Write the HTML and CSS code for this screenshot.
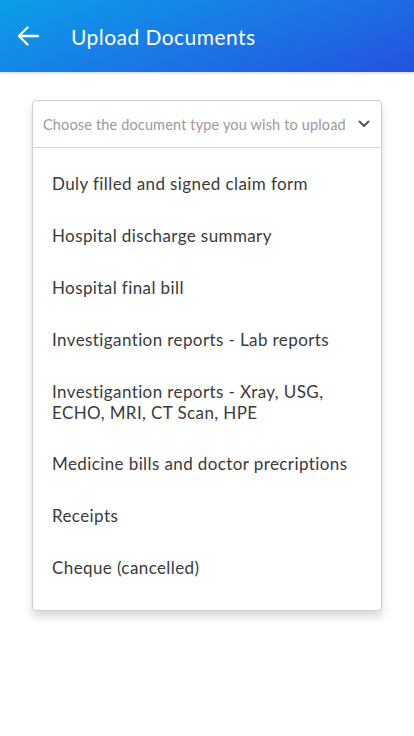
FILE: index.html
```html
<!DOCTYPE html>
<html>
<head>
<meta charset="utf-8">
<link rel="stylesheet" href="styles.css">
</head>
<body>
<header class="appbar">
  <svg class="back" width="22" height="20" viewBox="0 0 22 20"><path d="M21 10H2.5M10.5 1.5L2 10l8.5 8.5" fill="none" stroke="#fff" stroke-width="2.3" stroke-linecap="round" stroke-linejoin="round"/></svg>
  <h1 class="title">Upload Documents</h1>
</header>
<main class="content">
  <div class="select">
    <div class="select-head">
      <span class="placeholder">Choose the document type you wish to upload</span>
      <svg class="chev" width="12" height="8" viewBox="0 0 12 8"><path d="M1.5 1.5L6 6l4.5-4.5" fill="none" stroke="#555" stroke-width="2" stroke-linecap="round" stroke-linejoin="round"/></svg>
    </div>
    <ul class="menu">
      <li>Duly filled and signed claim form</li>
      <li>Hospital discharge summary</li>
      <li>Hospital final bill</li>
      <li>Investigantion reports - Lab reports</li>
      <li>Investigantion reports - Xray, USG, ECHO, MRI, CT Scan, HPE</li>
      <li>Medicine bills and doctor precriptions</li>
      <li>Receipts</li>
      <li>Cheque (cancelled)</li>
    </ul>
  </div>
</main>
</body>
</html>
```
FILE: styles.css
```css
* { box-sizing: border-box; }
html, body { margin: 0; padding: 0; background: #fff; }
body { font-family: Lato, "Open Sans", sans-serif; width: 414px; height: 736px; overflow: hidden; }
.appbar {
  height: 72px;
  display: flex;
  align-items: center;
  padding-left: 17px;
  background: linear-gradient(160deg, #0aa0e8 0%, #1a78e6 50%, #2552e0 100%);
  box-shadow: 0 1px 3px rgba(0,0,0,0.2);
}
.back { display: block; margin-top: -1px; }
.title {
  margin: 0 0 0 32px;
  color: #fff;
  font-weight: 400;
  font-size: 21px;
  letter-spacing: 0.45px;
}
.content { padding: 28px 32px 0 32px; }
.select {
  border: 1px solid #cfcfcf;
  border-radius: 4px;
  box-shadow: 0 6px 8px rgba(0,0,0,0.15);
  background: #fff;
}
.select-head {
  height: 47px;
  display: flex;
  align-items: center;
  justify-content: space-between;
  padding: 0 11px 0 10px;
  border-bottom: 1px solid #d6d6d6;
}
.placeholder { color: #9a9a9a; font-size: 14.5px; white-space: nowrap; letter-spacing: 0.15px; }
.chev { display: block; }
.menu {
  list-style: none;
  margin: 0;
  padding: 25px 20px 32px 19px;
}
.menu li {
  color: #3a3a3a;
  font-size: 17px;
  line-height: 21px;
  letter-spacing: 0.4px;
}
.menu li + li { margin-top: 30.9px; }
```
